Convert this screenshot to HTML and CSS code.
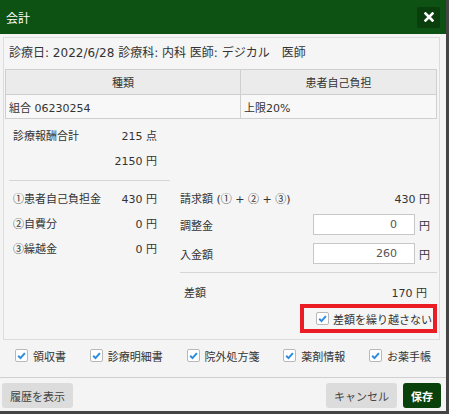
FILE: index.html
```html
<!DOCTYPE html>
<html lang="ja">
<head>
  <meta charset="UTF-8" />
  <meta name="viewport" content="width=device-width, initial-scale=1.0"/>
  <title>会計</title>
  <link rel="stylesheet" href="styles.css">
</head>
<body>
  <div class="dialog">
    <div class="dlg-head">
      <span class="dlg-title">会計</span>
      <button class="close" type="button">
        <svg width="10" height="10" viewBox="0 0 10 10"><path d="M1.5 1.5l7 7M8.5 1.5l-7 7" stroke="#fff" stroke-width="2.6" stroke-linecap="square"/></svg>
      </button>
    </div>

    <div class="dlg-body">
      <div class="panel">
        <div class="visit">診療日: 2022/6/28 診療科: 内科 医師: デジカル　医師</div>
        <table class="ins">
          <tr><th class="c1">種類</th><th>患者自己負担</th></tr>
          <tr><td>組合 06230254</td><td>上限20%</td></tr>
        </table>

        <div class="calc">
          <div class="calc-left">
            <div class="row"><span>診療報酬合計</span><span>215 点</span></div>
            <div class="row"><span></span><span>2150 円</span></div>
            <div class="rule"></div>
            <div class="row"><span><span class="circ">①</span>患者自己負担金</span><span>430 円</span></div>
            <div class="row"><span><span class="circ">②</span>自費分</span><span>0 円</span></div>
            <div class="row"><span><span class="circ">③</span>繰越金</span><span>0 円</span></div>
          </div>
          <div class="calc-right">
            <div class="row"><span>請求額 (<span class="circ">①</span> + <span class="circ">②</span> + <span class="circ">③</span>)</span><span>430 円</span></div>
            <div class="row tall"><span>調整金</span><span class="amt"><input class="num" type="text" value="0"><span>円</span></span></div>
            <div class="row tall"><span>入金額</span><span class="amt"><input class="num" type="text" value="260"><span>円</span></span></div>
            <div class="rule"></div>
            <div class="row diff"><span>差額</span><span>170 円</span></div>
            <div class="carry">
              <label class="check"><span class="box"><svg width="11" height="11" viewBox="0 0 11 11"><path d="M2.2 5.8l2.3 2.3 4.4-5" fill="none" stroke="#2b8be0" stroke-width="2"/></svg></span>差額を繰り越さない</label>
            </div>
          </div>
        </div>
      </div>
    </div>

    <div class="prints" id="prints"></div>

    <div class="dlg-foot">
      <button class="btn history" type="button">履歴を表示</button>
      <button class="btn" type="button">キャンセル</button>
      <button class="btn save" type="button">保存</button>
    </div>
  </div>

  <script>
    const docs = ["領収書", "診療明細書", "院外処方箋", "薬剤情報", "お薬手帳"];
    const prints = document.getElementById("prints");
    docs.forEach(name => {
      const label = document.createElement("label");
      label.className = "check";
      label.innerHTML = `<span class="box"><svg width="11" height="11" viewBox="0 0 11 11"><path d="M2.2 5.8l2.3 2.3 4.4-5" fill="none" stroke="#2b8be0" stroke-width="2"/></svg></span>${name}`;
      prints.appendChild(label);
    });
  </script>
</body>
</html>
```

FILE: styles.css
```css
body {
  margin: 0;
  background-color: #444;
  font-family: "DejaVu Sans", "Noto Sans CJK JP", sans-serif;
  font-size: 11px;
  color: #333;
}
.dialog {
  width: 446px;
  height: 411px;
  background-color: #f4f4f4;
  display: flex;
  flex-direction: column;
}
.dlg-head {
  height: 34px;
  flex: none;
  background-color: #0e5213;
  color: #fff;
  font-size: 12px;
  display: flex;
  align-items: center;
  justify-content: space-between;
  padding: 0 6px;
}
.close {
  width: 23px;
  height: 21px;
  border: none;
  border-radius: 2px;
  background-color: #0a3e0d;
  padding: 0;
  display: flex;
  align-items: center;
  justify-content: center;
}
.dlg-body {
  padding: 3px 6px 0 3px;
}
.panel {
  box-sizing: border-box;
  height: 303px;
  border: 1px solid #dcdcdc;
  background-color: #f5f5f5;
}
.visit {
  height: 31px;
  line-height: 31px;
  padding-left: 5px;
  font-size: 12px;
}
.ins {
  border-collapse: collapse;
  width: 432px;
  margin-left: 1px;
}
.ins th, .ins td {
  border: 1px solid #cfcfcf;
  padding: 0 4px;
  font-weight: normal;
}
.ins th {
  height: 24px;
  background-color: #ebebeb;
  text-align: center;
}
.ins th.c1 {
  width: 226px;
}
.ins td {
  height: 23px;
  background-color: #f8f8f8;
  padding-left: 3px;
}
.calc {
  display: flex;
  margin-top: 3px;
  padding: 0 2px 0 5px;
}
.calc-left {
  width: 161px;
  flex: none;
}
.calc-left .row {
  padding: 0 13px 0 4px;
}
.calc-right {
  flex: 1;
  margin-left: 10px;
  padding-top: 63px;
  display: flex;
  flex-direction: column;
}
.calc-right .row {
  padding-right: 7px;
}
.row {
  height: 25px;
  display: flex;
  align-items: center;
  justify-content: space-between;
  white-space: nowrap;
}
.row.tall {
  height: 29px;
}
.calc-right .row.diff {
  padding: 0 10px 0 4px;
}
/* circled digits come from the CJK face so they are full width */
.circ {
  font-family: "Noto Sans CJK JP", sans-serif;
}
.rule {
  border-top: 1px solid #d6d6d6;
  margin: 8px 0 4px;
}
.calc-right .rule {
  margin: 4px 0 6px;
}
.amt {
  display: flex;
  align-items: center;
}
.num {
  box-sizing: border-box;
  width: 102px;
  height: 21px;
  border: 1px solid #c8c8c8;
  background-color: #fff;
  color: #555;
  font: inherit;
  text-align: right;
  padding: 0 17px 0 4px;
  margin-right: 4px;
}
.carry {
  align-self: flex-end;
  box-sizing: border-box;
  width: 137px;
  height: 29px;
  border: 4px solid #ec1c24;
  display: flex;
  align-items: center;
  padding-left: 12px;
}
.check {
  display: flex;
  align-items: center;
  gap: 5px;
  white-space: nowrap;
}
.carry .check {
  gap: 4px;
}
.box {
  box-sizing: border-box;
  width: 13px;
  height: 13px;
  border: 1px solid #b8b8b8;
  border-radius: 2px;
  background-color: #fff;
  display: flex;
  align-items: center;
  justify-content: center;
}
.prints {
  box-sizing: border-box;
  height: 37px;
  display: flex;
  align-items: center;
  justify-content: space-between;
  padding: 0 15px 6px 15px;
}
.dlg-foot {
  border-top: 1px solid #d0d0d0;
  flex: 1;
  display: flex;
  gap: 6px;
  padding: 5px 5px 0 2px;
}
.btn {
  height: 25px;
  border: none;
  border-radius: 3px;
  background-color: #dcdcdc;
  color: #444;
  font: inherit;
  padding: 0 8px;
}
.history {
  margin-right: auto;
}
.save {
  background-color: #0a400c;
  color: #fff;
  font-weight: bold;
}
```
